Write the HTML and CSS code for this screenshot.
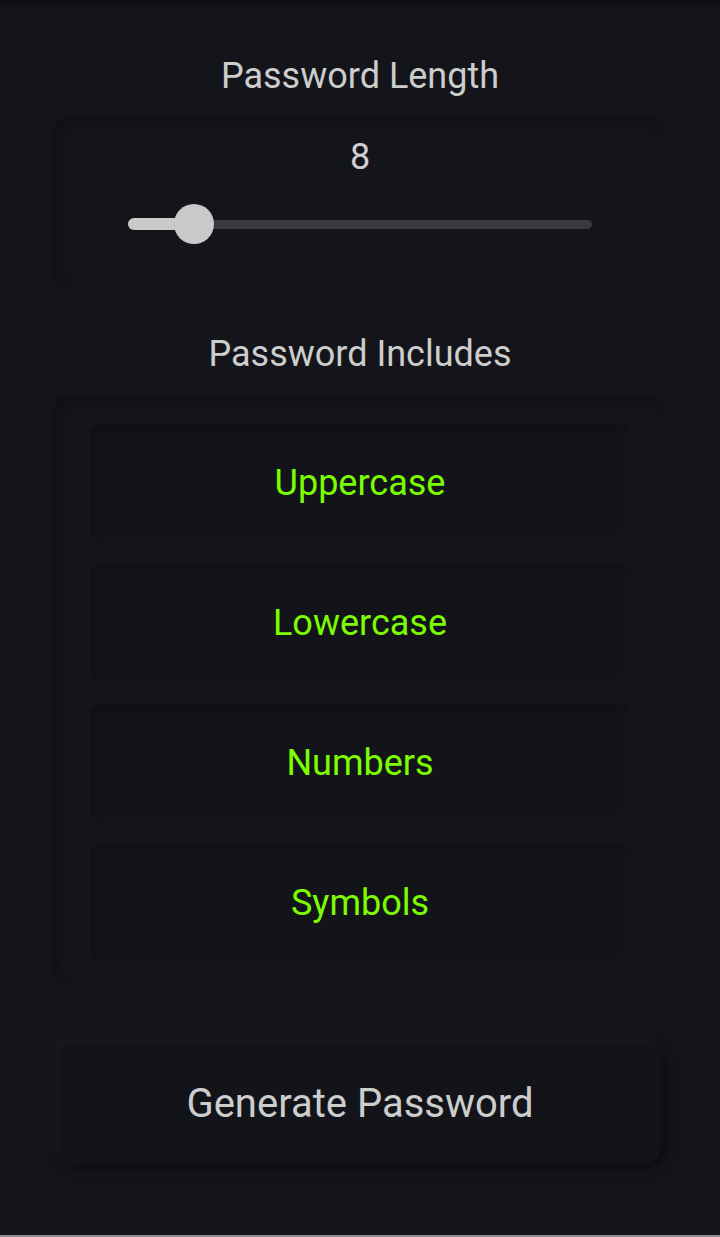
FILE: index.html
```html
<!DOCTYPE html>
<html lang="en">
<head>
<meta charset="utf-8">
<title>Password Generator</title>
<link rel="stylesheet" href="styles.css">
</head>
<body>
<div class="screen">
  <div class="status-strip"></div>
  <main class="content">
    <h2 class="section-title title-length">Password Length</h2>
    <section class="card length-card">
      <div class="length-value">8</div>
      <div class="slider">
        <div class="slider-track"></div>
        <div class="slider-fill"></div>
        <div class="slider-thumb"></div>
      </div>
    </section>
    <h2 class="section-title title-includes">Password Includes</h2>
    <section class="card includes-card">
      <div class="option">Uppercase</div>
      <div class="option">Lowercase</div>
      <div class="option">Numbers</div>
      <div class="option">Symbols</div>
    </section>
    <button class="generate">Generate Password</button>
  </main>
  <div class="nav-line"></div>
</div>
</body>
</html>
```

FILE: styles.css
```css
* { box-sizing: border-box; }
html, body { margin: 0; padding: 0; }
body {
  background: #14151a;
  font-family: Roboto, "Noto Sans", sans-serif;
  color: #cfcfcf;
}
.screen {
  height: 1237px;
  display: flex;
  flex-direction: column;
  overflow: hidden;
}
.status-strip {
  height: 5px;
  background: #0e0f12;
  flex: none;
}
.content {
  flex: 1;
  display: flex;
  flex-direction: column;
  align-items: center;
}
.section-title {
  margin: 0;
  font-weight: 400;
  font-size: 36px;
  line-height: 42px;
  color: #cdcdcd;
  text-align: center;
}
.title-length { margin-top: 50px; }
.title-includes { margin-top: 44px; }
.card {
  width: 616px;
  border-radius: 20px;
  background: #14151a;
  box-shadow: inset 4px 4px 9px #101115, inset -4px -4px 9px #17181d;
}
.length-card {
  margin-top: 20px;
  height: 172px;
  padding-top: 19px;
  display: flex;
  flex-direction: column;
  align-items: center;
}
.length-value {
  font-size: 36px;
  line-height: 42px;
  color: #cfcfcf;
}
.slider {
  position: relative;
  margin-top: 26px;
  width: 464px;
  height: 40px;
}
.slider-track {
  position: absolute;
  left: 0;
  right: 0;
  top: 16px;
  height: 9px;
  border-radius: 5px;
  background: #393a3f;
}
.slider-fill {
  position: absolute;
  left: 0;
  top: 14px;
  width: 66px;
  height: 12px;
  border-radius: 6px;
  background: #c9c9c9;
}
.slider-thumb {
  position: absolute;
  left: 46px;
  top: 0;
  width: 40px;
  height: 40px;
  border-radius: 50%;
  background: #c9c9c9;
}
.includes-card {
  margin-top: 20px;
  padding: 28px 38px 27px;
  display: flex;
  flex-direction: column;
  gap: 20px;
}
.option {
  height: 120px;
  border-radius: 14px;
  background: #13141a;
  box-shadow: inset 4px 4px 8px #101115, inset -4px -4px 8px #17181d;
  display: flex;
  align-items: center;
  justify-content: center;
  font-size: 36px;
  color: #7cfc00;
}
.generate {
  margin-top: 53px;
  width: 600px;
  height: 120px;
  border: none;
  border-radius: 14px;
  background: #13141a;
  box-shadow: -6px -6px 12px #18191e, 6px 6px 12px #0e0f12;
  font-family: Roboto, "Noto Sans", sans-serif;
  font-size: 40px;
  color: #cdcdcd;
  padding: 0;
}
.nav-line {
  flex: none;
  height: 2px;
  background: #8e8f91;
}
```
